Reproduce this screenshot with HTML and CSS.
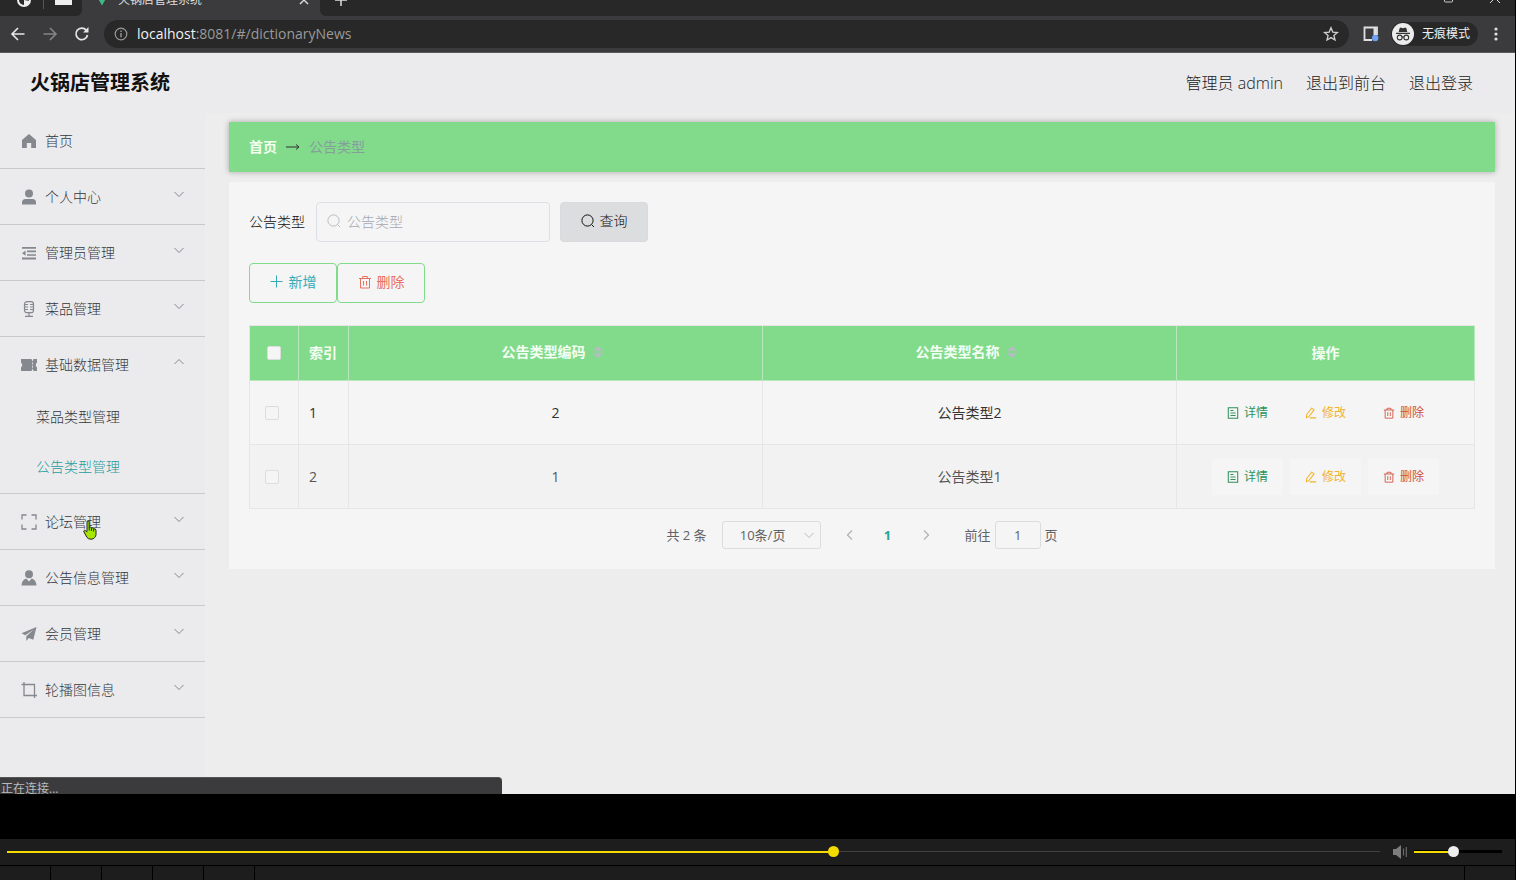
FILE: index.html
```
<!DOCTYPE html>
<html lang="zh-CN">
<head>
    <meta charset="UTF-8">
    <meta name="viewport" content="width=device-width, initial-scale=1.0">
    <title>火锅店管理系统</title>
    <link rel="stylesheet" href="styles.css">
</head>
<body>

<!-- 图标 -->
<svg class="sprite" aria-hidden="true">
  <symbol id="i-home" viewBox="0 0 16 16"><path fill="currentColor" d="M8 1 L15 7 V15 H10.200 V10 H5.800 V15 H1 V7 Z"/></symbol>
  <symbol id="i-user" viewBox="0 0 16 16"><circle cx="8" cy="4.500" r="4" fill="currentColor"/><path fill="currentColor" d="M1 15.500 V13.500 Q1 10 4.500 10 H11.500 Q15 10 15 13.500 V15.500 Z"/></symbol>
  <symbol id="i-fold" viewBox="0 0 16 16"><path fill="currentColor" d="M1 2h14v1.800H1zM6 5.600h9v1.600H6zM6 9.200h9v1.600H6zM1 12.600h14v1.800H1zM1 8.200l3.600-2.600v5.200z"/></symbol>
  <symbol id="i-mic" viewBox="0 0 16 16"><g fill="none" stroke="currentColor" stroke-width="1.200"><rect x="3.500" y=".7" width="9" height="11" rx="2.500"/><path d="M3.500 3.500h3.500M3.500 6h3.500M3.500 8.500h3.500M12.500 3.500H9M12.500 6H9M12.500 8.500H9M8 12v3M4 15.300h8"/></g></symbol>
  <symbol id="i-ticket" viewBox="0 0 16 16"><path fill="currentColor" d="M0 2H10.500L11.500 4.500 12.500 2H16V5.500Q13.500 8 16 10.500V14H12.500L11.500 11.500 10.500 14H0V10.500Q2.500 8 0 5.500Z"/><path stroke="#ebebed" stroke-width=".8" d="M11.500 5.500v2M11.500 8.700v2"/></symbol>
  <symbol id="i-full" viewBox="0 0 16 16"><path fill="none" stroke="currentColor" stroke-width="1.300" d="M1 5.500V1h4.500M10.500 1H15v4.500M15 10.500V15h-4.500M5.500 15H1v-4.500"/></symbol>
  <symbol id="i-custom" viewBox="0 0 16 16"><circle cx="8" cy="4.300" r="4" fill="currentColor"/><path fill="currentColor" d="M.5 15.500Q.8 10 5.200 8.500L8 11.500 10.800 8.500Q15.200 10 15.500 15.500Z"/></symbol>
  <symbol id="i-plane" viewBox="0 0 16 16"><path fill="currentColor" d="M15.500 1 L.5 7.200 4.200 9.200 12.500 3.800 5.300 10.200 V15 L7.800 12 12.300 13.800Z"/></symbol>
  <symbol id="i-crop" viewBox="0 0 16 16"><path fill="none" stroke="currentColor" stroke-width="1.300" d="M.5 2.500H13.500V16M3 0V13.500H16"/></symbol>
  <symbol id="i-down" viewBox="0 0 12 12"><path fill="none" stroke="currentColor" d="M1.500 4 6 8.500 10.500 4"/></symbol>
  <symbol id="i-up" viewBox="0 0 12 12"><path fill="none" stroke="currentColor" d="M1.500 8 6 3.500 10.500 8"/></symbol>
  <symbol id="i-left" viewBox="0 0 12 12"><path fill="none" stroke="currentColor" stroke-width="1.300" d="M8 1.500 3.500 6 8 10.500"/></symbol>
  <symbol id="i-right" viewBox="0 0 12 12"><path fill="none" stroke="currentColor" stroke-width="1.300" d="M4 1.500 8.500 6 4 10.500"/></symbol>
  <symbol id="i-search" viewBox="0 0 14 14"><circle cx="6.500" cy="6.500" r="5.600" fill="none" stroke="currentColor"/><path stroke="currentColor" d="M10.700 10.700 13 13"/></symbol>
  <symbol id="i-plus" viewBox="0 0 14 14"><path stroke="currentColor" d="M6.500 .5v12M.5 6.500h12"/></symbol>
  <symbol id="i-trash" viewBox="0 0 14 14"><path fill="none" stroke="currentColor" d="M1 3.500h12M2.500 3.500v9.500h9V3.500M4.700 3.500v-2h4.600v2M5.500 6v4.500M8.500 6v4.500"/></symbol>
  <symbol id="i-doc" viewBox="0 0 14 14"><path fill="none" stroke="currentColor" stroke-width="1.200" d="M1.500 1h11v12h-11zM4 4.200h3.500M4 7h6M4 9.800h6"/></symbol>
  <symbol id="i-edit" viewBox="0 0 14 14"><path fill="none" stroke="currentColor" stroke-width="1.200" d="M2 8.800 7.800 1.300 10.600 3.400 4.800 11 1.700 12.500ZM5.500 12.700H13"/></symbol>
</svg>

<div class="browser">
  <div class="tabs">
    <div class="tabs-left">
      <svg class="logo" viewBox="0 0 16 16" width="16" height="16"><circle cx="8" cy="8" r="6" fill="none" stroke="#eee" stroke-width="2"/><path fill="#eee" d="M8 8l6 1-2 4-4 1z"/></svg>
      <span class="sep"></span>
      <span class="window"></span>
    </div>
    <div class="tab">
      <svg viewBox="0 0 12 12" width="12" height="12"><path fill="#41b883" d="M0 1h12L6 11.500z"/><path fill="#35495e" d="M3 1h6L6 6z"/></svg>
      <span class="tab-title">火锅店管理系统</span>
      <svg viewBox="0 0 10 10" width="10" height="10"><path stroke="#ddd" stroke-width="1.400" d="M1 1l8 8M9 1l-8 8"/></svg>
    </div>
    <div class="tabs-right">
      <svg viewBox="0 0 12 12" width="12" height="12"><path stroke="#ddd" stroke-width="1.500" d="M6 0v12M0 6h12"/></svg>
      <svg class="restore" viewBox="0 0 10 10" width="10" height="10"><rect x=".5" y="-3" width="8" height="10" rx="1" fill="none" stroke="#ccc"/></svg>
      <svg viewBox="0 0 10 10" width="10" height="10"><path stroke="#ddd" d="M0-2l10 10M10-2L0 8"/></svg>
    </div>
  </div>

  <div class="toolbar">
    <svg viewBox="0 0 16 16" width="16" height="16"><path fill="none" stroke="#e8e8e8" stroke-width="1.600" d="M14.500 8H2M8 2L2 8l6 6"/></svg>
    <svg viewBox="0 0 16 16" width="16" height="16"><path fill="none" stroke="#858585" stroke-width="1.600" d="M1.500 8H14M8 2l6 6-6 6"/></svg>
    <svg viewBox="0 0 16 16" width="16" height="16"><path fill="none" stroke="#e8e8e8" stroke-width="1.700" d="M13.500 9A5.800 5.800 0 1 1 12.300 4.200"/><path fill="#e8e8e8" d="M14.500 1v5.500H9z"/></svg>
    <div class="address">
      <svg viewBox="0 0 14 14" width="14" height="14"><circle cx="7" cy="7" r="5.800" fill="none" stroke="#9a9a9a" stroke-width="1.200"/><path stroke="#9a9a9a" stroke-width="1.400" d="M7 6v4.200M7 3.500v1.400"/></svg>
      <span class="url"><b>localhost</b>:8081/#/dictionaryNews</span>
      <svg viewBox="0 0 16 16" width="16" height="16"><path fill="none" stroke="#d0d0d0" stroke-width="1.300" d="M8 1.800l1.800 4.300 4.600.4-3.500 3 1.100 4.500L8 11.600 4 14l1.100-4.500-3.500-3 4.600-.4z"/></svg>
    </div>
    <svg viewBox="0 0 16 16" width="16" height="16"><path fill="none" stroke="#e0e0e0" stroke-width="1.800" d="M9 14H1.500V1.500H14V9"/><path stroke="#e0e0e0" stroke-width="3" d="M12 2v7"/><circle cx="12.200" cy="12" r="3.200" fill="#6ea0f5"/></svg>
    <div class="incognito">
      <svg viewBox="0 0 22 22" width="22" height="22"><circle cx="11" cy="11" r="11" fill="#ececec"/><path fill="#333" d="M7.500 5.500 8.500 4.500 11 5.200 13.500 4.500 14.500 5.500 15.300 9H6.700ZM4 9.800h14v1.100H4z"/><g fill="none" stroke="#333" stroke-width="1.100"><circle cx="7.700" cy="14.500" r="2.400"/><circle cx="14.300" cy="14.500" r="2.400"/><path d="M10 14.200q1-.7 2 0"/></g></svg>
      <span>无痕模式</span>
    </div>
    <svg class="dots" viewBox="0 0 4 16" width="4" height="16"><g fill="#e0e0e0"><circle cx="2" cy="3" r="1.600"/><circle cx="2" cy="8" r="1.600"/><circle cx="2" cy="13" r="1.600"/></g></svg>
  </div>
</div>

<div class="page">
  <header class="header">
    <h1 class="title">火锅店管理系统</h1>
    <span>管理员 admin</span>
    <a href="#">退出到前台</a>
    <a href="#">退出登录</a>
  </header>

  <div class="container">
    <ul class="menu">
      <li><a href="#" class="menu-title"><svg><use href="#i-home"/></svg><span>首页</span></a></li>
      <li><a href="#" class="menu-title"><svg><use href="#i-user"/></svg><span>个人中心</span><svg class="arrow"><use href="#i-down"/></svg></a></li>
      <li><a href="#" class="menu-title"><svg><use href="#i-fold"/></svg><span>管理员管理</span><svg class="arrow"><use href="#i-down"/></svg></a></li>
      <li><a href="#" class="menu-title"><svg><use href="#i-mic"/></svg><span>菜品管理</span><svg class="arrow"><use href="#i-down"/></svg></a></li>
      <li>
        <a href="#" class="menu-title"><svg><use href="#i-ticket"/></svg><span>基础数据管理</span><svg class="arrow"><use href="#i-up"/></svg></a>
        <ul class="submenu">
          <li><a href="#">菜品类型管理</a></li>
          <li><a href="#" class="current">公告类型管理</a></li>
        </ul>
      </li>
      <li>
        <a href="#" class="menu-title"><svg><use href="#i-full"/></svg><span>论坛管理</span><svg class="arrow"><use href="#i-down"/></svg></a>
        <svg class="hand" viewBox="0 0 14 20" width="14" height="20"><path fill="#a8e800" stroke="#222" stroke-width="1" stroke-linejoin="round" d="M4 11.500V2Q4 .8 5 .8T6.200 2v5.200q1.800-.6 2.200.6 1.700-.4 2.100.9 2.300-.4 2.500 1.600v4.200q0 1.800-1.500 3.200-1 1.500-3.500 1.500-2.800 0-4-1.800L1 12q-.6-1.400.4-1.700Q2.500 10.200 4 12.200M6.200 7v3.500M8.400 8v3M10.600 9v2.500"/></svg>
      </li>
      <li><a href="#" class="menu-title"><svg><use href="#i-custom"/></svg><span>公告信息管理</span><svg class="arrow"><use href="#i-down"/></svg></a></li>
      <li><a href="#" class="menu-title"><svg><use href="#i-plane"/></svg><span>会员管理</span><svg class="arrow"><use href="#i-down"/></svg></a></li>
      <li><a href="#" class="menu-title"><svg><use href="#i-crop"/></svg><span>轮播图信息</span><svg class="arrow"><use href="#i-down"/></svg></a></li>
    </ul>

    <main class="main">
      <nav class="breadcrumb">
        <a href="#">首页</a>
        <svg viewBox="0 0 14 8" width="14" height="8"><path fill="none" stroke="#333" d="M0 4h13M10 1.500 13 4 10 6.500"/></svg>
        <span>公告类型</span>
      </nav>

      <section class="card">
        <form class="search">
          <label for="typeName">公告类型</label>
          <div class="search-box">
            <svg><use href="#i-search"/></svg>
            <input type="text" id="typeName" placeholder="公告类型">
          </div>
          <button type="button" class="btn btn-query"><svg><use href="#i-search"/></svg>查询</button>
        </form>

        <div class="actions">
          <button type="button" class="btn btn-add"><svg><use href="#i-plus"/></svg>新增</button>
          <button type="button" class="btn btn-del"><svg><use href="#i-trash"/></svg>删除</button>
        </div>

        <table class="table">
          <colgroup><col class="col-check"><col class="col-index"><col><col><col class="col-op"></colgroup>
          <thead>
            <tr>
              <th><input type="checkbox" aria-label="全选"></th>
              <th class="left">索引</th>
              <th><span class="sort">公告类型编码<svg viewBox="0 0 10 14"><path fill="#b4bcc4" d="M0 6 5 1l5 5zM0 8h10l-5 5z"/></svg></span></th>
              <th><span class="sort">公告类型名称<svg viewBox="0 0 10 14"><path fill="#b4bcc4" d="M0 6 5 1l5 5zM0 8h10l-5 5z"/></svg></span></th>
              <th>操作</th>
            </tr>
          </thead>
          <tbody>
            <tr>
              <td class="check"><input type="checkbox" aria-label="选择 1"></td>
              <td class="left">1</td>
              <td>2</td>
              <td>公告类型2</td>
              <td>
                <div class="ops">
                  <button type="button" class="op detail"><svg><use href="#i-doc"/></svg>详情</button>
                  <button type="button" class="op edit"><svg><use href="#i-edit"/></svg>修改</button>
                  <button type="button" class="op remove"><svg><use href="#i-trash"/></svg>删除</button>
                </div>
              </td>
            </tr>
            <tr>
              <td class="check"><input type="checkbox" aria-label="选择 2"></td>
              <td class="left">2</td>
              <td>1</td>
              <td>公告类型1</td>
              <td>
                <div class="ops">
                  <button type="button" class="op detail"><svg><use href="#i-doc"/></svg>详情</button>
                  <button type="button" class="op edit"><svg><use href="#i-edit"/></svg>修改</button>
                  <button type="button" class="op remove"><svg><use href="#i-trash"/></svg>删除</button>
                </div>
              </td>
            </tr>
          </tbody>
        </table>

        <div class="pagination">
          <span>共 2 条</span>
          <div class="size">
            <select aria-label="每页条数"><option>10条/页</option></select>
            <svg><use href="#i-down"/></svg>
          </div>
          <button type="button" class="pager" aria-label="上一页"><svg><use href="#i-left"/></svg></button>
          <button type="button" class="pager current">1</button>
          <button type="button" class="pager" aria-label="下一页"><svg><use href="#i-right"/></svg></button>
          <div class="jump">
            <label for="jump">前往</label>
            <input type="text" id="jump" value="1">
            <span>页</span>
          </div>
        </div>
      </section>
    </main>
  </div>

  <div class="status">正在连接...</div>
</div>

<!-- 播放器控制条 -->
<div class="player">
  <div class="controls">
    <input type="range" class="range seek" min="0" max="1000" value="603" style="--fill: 60.3%" aria-label="进度">
    <svg viewBox="0 0 16 14" width="16" height="14"><path fill="#7d7d7d" d="M1 4h3l5-4v14l-5-4H1z"/><path stroke="#6a6a6a" stroke-width="1.200" d="M11.500 3.500v7M14.300 2v10"/></svg>
    <input type="range" class="range volume" min="0" max="1000" value="440" style="--fill: 44%" aria-label="音量">
  </div>
  <div class="cells">
    <span></span><span></span><span></span><span></span><span></span><span class="last"></span>
  </div>
</div>

</body>
</html>
```

FILE: styles.css
```
* {
  box-sizing: border-box;
}

body, ul, li, h1 {
  margin: 0;
  padding: 0;
}

ul {
  list-style-type: none;
}

a {
  color: inherit;
  text-decoration: none;
}

svg {
  flex: none;
}

button, input, select {
  font: inherit;
  color: inherit;
  margin: 0;
}

body {
  display: flex;
  flex-direction: column;
  min-height: 100vh;
  padding-right: 1px;
  background: #000;
  color: #333;
  font: 14px/20px "Open Sans", "Noto Sans CJK SC", sans-serif;
}

.sprite {
  position: absolute;
  width: 0;
  height: 0;
}

/* 浏览器 */
.browser {
  background: #3b3b3d;
  border-bottom: 1px solid #59595b;
}

.tabs {
  display: flex;
  height: 16px;
  overflow: hidden;
}

.tabs > div {
  display: flex;
  align-items: center;
  height: 32px;
  margin-top: -16px;
}

.tabs-left {
  width: 82px;
  padding-left: 16px;
  gap: 10px;
  background: #282828;
  border-radius: 0 0 6px 0;
}

.tabs-left .sep {
  width: 1px;
  height: 18px;
  margin: 0 1px;
  background: #555;
}

.tabs-left .window {
  width: 17px;
  height: 10px;
  background: #eee;
}

.tab {
  width: 238px;
  padding: 0 11px 0 14px;
  gap: 10px;
  color: #ddd;
  font-size: 12px;
}

.tab-title {
  flex: 1;
}

.tabs-right {
  flex: 1;
  padding: 0 15px;
  gap: 36px;
  background: #282828;
  border-radius: 0 0 0 6px;
}

.tabs-right .restore {
  margin-left: auto;
}

.toolbar {
  display: flex;
  align-items: center;
  height: 36px;
  padding: 0 17px 0 10px;
  gap: 16px;
}

.address {
  flex: 1;
  display: flex;
  align-items: center;
  gap: 9px;
  height: 28px;
  margin-right: -2px;
  margin-left: -2px;
  padding: 0 10px;
  border-radius: 14px;
  background: #282828;
}

.url {
  flex: 1;
  color: #9a9a9a;
}

.url b {
  color: #f2f2f2;
  font-weight: 400;
}

.incognito {
  display: flex;
  align-items: center;
  gap: 8px;
  height: 24px;
  margin-left: -4px;
  padding: 0 8px 0 1px;
  border-radius: 12px;
  background: #282828;
  color: #eee;
  font-size: 12px;
}

/* 页面 */
.page {
  flex: 1;
  position: relative;
  display: flex;
  flex-direction: column;
  margin-bottom: 45px;
  background: #ededed;
}

.header {
  display: flex;
  align-items: center;
  gap: 23px;
  height: 60px;
  padding: 0 42px 0 30px;
  background: #ebebed;
  color: #222;
  font-size: 16px;
  font-weight: 300;
}

.title {
  flex: 1;
  color: #111;
  font-size: 20px;
  font-weight: 700;
}

.container {
  flex: 1;
  display: flex;
}

.menu {
  width: 205px;
  background: #ebebed;
  color: #33383d;
  font-weight: 300;
}

.menu > li {
  position: relative;
  border-bottom: 1px solid #c9c9cb;
}

.menu-title {
  display: flex;
  align-items: center;
  gap: 8px;
  height: 55px;
  padding: 0 20px 0 21px;
}

.menu-title span {
  flex: 1;
}

.menu-title svg {
  width: 16px;
  height: 16px;
  color: #85888e;
}

.menu-title .arrow {
  width: 12px;
  height: 12px;
  margin-bottom: 6px;
}

.submenu {
  padding-bottom: 1px;
}

.submenu a {
  display: block;
  padding-left: 36px;
  line-height: 50px;
}

.submenu .current {
  color: #1f9ca0;
}

.hand {
  position: absolute;
  left: 83px;
  top: 26px;
}

.main {
  flex: 1;
  padding: 9px 20px 20px 24px;
}

.breadcrumb {
  display: flex;
  align-items: center;
  gap: 9px;
  height: 50px;
  margin-bottom: 10px;
  padding: 0 20px;
  background: #82db8b;
  box-shadow: 0 0 6px rgba(0, 0, 0, 0.3);
  color: #82a09c;
}

.breadcrumb a {
  color: #f2fff2;
  font-weight: 700;
}

.card {
  padding: 20px;
  background: #f5f5f5;
}

.search {
  display: flex;
  align-items: center;
  margin-bottom: 21px;
  color: #111;
  font-weight: 300;
}

.search-box {
  position: relative;
  margin: 0 10px 0 11px;
}

.search-box svg {
  position: absolute;
  left: 11px;
  top: 12px;
  width: 14px;
  height: 14px;
  color: #b8bcc4;
}

.search-box input {
  display: block;
  width: 234px;
  height: 40px;
  padding: 0 30px 2px;
  border: 1px solid #dcdfe6;
  border-radius: 4px;
  background: #f5f5f5;
}

.search-box input::placeholder {
  color: #a5a9b0;
}

.btn {
  display: flex;
  align-items: center;
  justify-content: center;
  gap: 5px;
  width: 88px;
  height: 40px;
  padding: 0 0 2px;
  border: 1px solid #82db8b;
  border-radius: 4px;
  background: #f5f5f5;
}

.btn svg {
  width: 14px;
  height: 14px;
}

.btn-query {
  border-color: #d8dadd;
  background: #dcdddf;
}

.btn-add {
  color: #35abb5;
}

.btn-del {
  color: #e8705c;
}

.actions {
  display: flex;
  margin-bottom: 22px;
}

.table {
  width: 100%;
  table-layout: fixed;
  border-spacing: 0;
  border: 1px solid #e6e6e8;
  border-width: 1px 0 0 1px;
}

.col-check {
  width: 49px;
}

.col-index {
  width: 50px;
}

.col-op {
  width: 298px;
}

.table th, .table td {
  height: 64px;
  padding: 0;
  border: 1px solid #e6e6e8;
  border-width: 0 1px 1px 0;
  text-align: center;
}

.table th {
  height: 55px;
  border-color: #b8e6bd;
  background: #82db8b;
  color: #f4fff4;
}

.table .left {
  padding-left: 10px;
  text-align: left;
}

.table .check {
  padding-right: 4px;
}

.table tr:nth-child(2) td {
  background: #f2f2f2;
  color: #555;
}

.table input {
  appearance: none;
  display: block;
  width: 14px;
  height: 14px;
  margin: 0 auto;
  border: 1px solid #dcdcdf;
  border-radius: 2px;
  background: #f5f5f5;
}

.sort {
  display: flex;
  align-items: center;
  justify-content: center;
  gap: 7px;
  padding: 0 7px 2px 0;
}

.sort svg {
  width: 10px;
  height: 14px;
}

.ops {
  display: flex;
  justify-content: center;
  gap: 7px;
}

.op {
  display: flex;
  align-items: center;
  justify-content: center;
  gap: 5px;
  width: 71px;
  height: 36px;
  padding: 0;
  border: 0;
  background: #f5f5f5;
  font-size: 12px;
}

.op svg {
  width: 12px;
  height: 12px;
}

.detail {
  color: #2f9158;
}

.edit {
  color: #f0b429;
}

.remove {
  color: #cf4f3c;
}

.pagination {
  display: flex;
  align-items: center;
  justify-content: center;
  margin-top: 12px;
  color: #606266;
  font-size: 13px;
}

.size {
  position: relative;
  margin: 0 10px 0 15px;
}

.size select {
  appearance: none;
  display: block;
  width: 99px;
  height: 28px;
  padding: 0 17px 0 0;
  border: 1px solid #dcdcdf;
  border-radius: 3px;
  background: #f5f5f5;
  text-align: center;
  text-align-last: center;
}

.size svg {
  position: absolute;
  right: 6px;
  top: 8px;
  width: 12px;
  height: 12px;
  color: #b8bcc4;
}

.pager {
  display: flex;
  align-items: center;
  justify-content: center;
  width: 38px;
  height: 28px;
  padding: 0;
  border: 0;
  background: none;
}

.pager svg {
  width: 12px;
  height: 12px;
  color: #b0b3b8;
}

.pager.current {
  color: #26a69a;
  font-weight: 700;
}

.jump {
  display: flex;
  align-items: center;
  gap: 4px;
  margin-left: 20px;
}

.jump input {
  width: 46px;
  height: 28px;
  padding: 0;
  border: 1px solid #dcdcdf;
  border-radius: 3px;
  background: #f5f5f5;
  text-align: center;
}

.status {
  position: absolute;
  left: 0;
  bottom: 0;
  width: 502px;
  height: 17px;
  padding-left: 1px;
  overflow: hidden;
  border-top: 1px solid #555;
  border-radius: 0 4px 0 0;
  background: #3b3b3d;
  color: #b8bcbe;
  font-size: 12px;
  line-height: 22px;
}

/* 播放器 */
.player {
  background: #1d1d1d;
}

.controls {
  display: flex;
  align-items: center;
  height: 26px;
  padding: 0 13px 1px 7px;
}

.range {
  appearance: none;
  height: 11px;
  margin: 0;
  background: linear-gradient(#f5dc00, #f5dc00) left / var(--fill) 2px no-repeat, linear-gradient(#414141, #414141) center / 100% 1px no-repeat;
}

.range::-webkit-slider-thumb {
  appearance: none;
  width: 11px;
  height: 11px;
  border-radius: 50%;
  background: #f5dc00;
}

.seek {
  flex: 1;
  margin-right: 12px;
}

.volume {
  width: 88px;
  margin-left: 6px;
  background: linear-gradient(#f5dc00, #f5dc00) left / var(--fill) 2px no-repeat, linear-gradient(#000, #000) center / 100% 3px no-repeat;
}

.volume::-webkit-slider-thumb {
  background: #eee;
}

.cells {
  display: flex;
  height: 15px;
  border-top: 1px solid #000;
}

.cells span {
  width: 51px;
  border-right: 1px solid #000;
}

.cells .last {
  margin-left: auto;
  border-left: 1px solid #000;
  border-right: 0;
}
```
